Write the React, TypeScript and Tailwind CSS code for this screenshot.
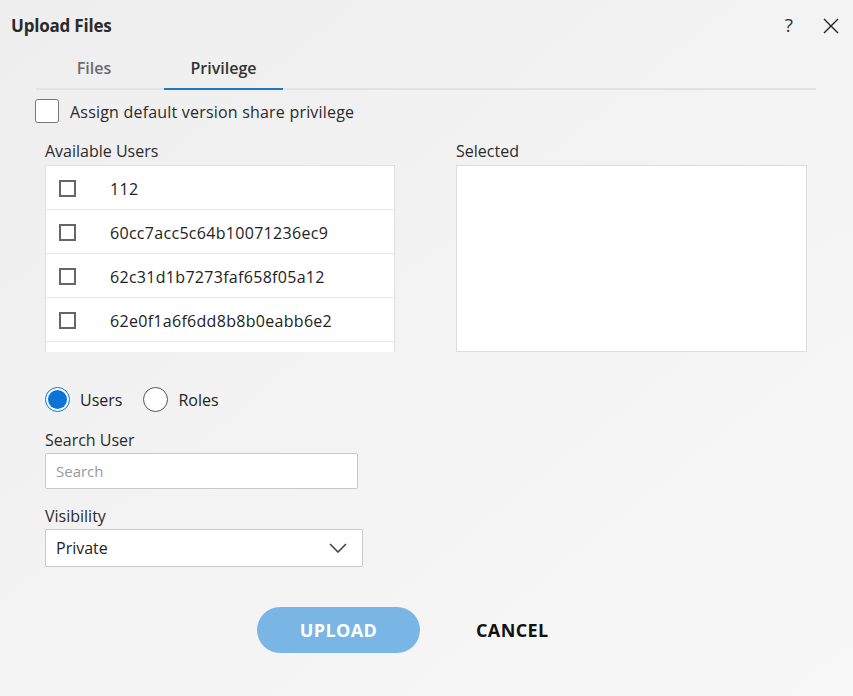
import React from "react";

const users = ["112", "60cc7acc5c64b10071236ec9", "62c31d1b7273faf658f05a12", "62e0f1a6f6dd8b8b0eabb6e2"];

export default function App() {
  return (
    <div
      className="relative w-[853px] h-[696px] overflow-hidden bg-gradient-to-br from-[#eeeeee] to-[#f8f8f8] text-[#222]"
      style={{ fontFamily: '"Open Sans", "Noto Sans", sans-serif' }}
    >
      {/* header */}
      <div className="flex items-center h-[50px] pl-[11px] pr-[14px]">
        <h1 className="text-[17px] font-bold text-[#2b2b2b] tracking-[-0.2px] mt-[2px]">Upload Files</h1>
        <div className="ml-auto flex items-center gap-[30px]">
          <span className="text-[19px] text-[#333] leading-none">?</span>
          <svg width="16" height="16" viewBox="0 0 16 16" className="mt-[1px]">
            <path d="M1 1 L15 15 M15 1 L1 15" stroke="#222" strokeWidth="1.4" />
          </svg>
        </div>
      </div>

      {/* tabs */}
      <div className="ml-[36px] w-[780px] flex border-b-2 border-[#e2e2e2] h-[40px]">
        <div className="w-[128px] flex justify-center pr-[12px] pt-[6px] text-[16px] leading-[24px] font-semibold text-[#6b6b6b]">Files</div>
        <div className="w-[119px] flex justify-center pt-[6px] text-[16px] leading-[24px] font-semibold text-[#333] border-b-2 border-[#1a7bc4] -mb-[2px]">
          Privilege
        </div>
      </div>

      {/* default privilege */}
      <div className="flex items-center ml-[35px] mt-[8px] gap-[11px]">
        <div className="w-[24px] h-[24px] bg-white border border-[#777] rounded-[3px]" />
        <span className="text-[16px] leading-[24px] tracking-[0.2px] text-[#2b2b2b] mt-[2px]">Assign default version share privilege</span>
      </div>

      {/* lists */}
      <div className="flex ml-[45px] mt-[16px] gap-[61px]">
        <div className="flex flex-col">
          <div className="text-[16px] leading-[22px] text-[#2b2b2b] mb-[3px]">Available Users</div>
          <div className="w-[350px] h-[187px] bg-white border border-[#e0e0e0] border-b-0 overflow-hidden">
            {users.map((u) => (
              <div key={u} className="flex items-center h-[44px] pt-[2px] border-b border-[#e6e6e6]">
                <div className="ml-[13px] w-[17px] h-[17px] border-2 border-[#666] bg-white" />
                <span className="ml-[34px] text-[16px] tracking-[0.3px] text-[#222]">{u}</span>
              </div>
            ))}
          </div>
        </div>
        <div className="flex flex-col">
          <div className="text-[16px] leading-[22px] text-[#2b2b2b] mb-[3px]">Selected</div>
          <div className="w-[351px] h-[187px] bg-white border border-[#dcdcdc]" />
        </div>
      </div>

      {/* user / role switch */}
      <div className="flex items-center ml-[45px] mt-[35px]">
        <div className="w-[25px] h-[25px] rounded-full border border-[#0b74d4] bg-white flex items-center justify-center">
          <div className="w-[19px] h-[19px] rounded-full bg-[#0b74d4]" />
        </div>
        <span className="ml-[10px] text-[16px] text-[#222]">Users</span>
        <div className="ml-[21px] w-[25px] h-[25px] rounded-full border border-[#555] bg-white" />
        <span className="ml-[10px] text-[16px] text-[#222]">Roles</span>
      </div>

      {/* search */}
      <div className="ml-[45px] mt-[17px] text-[16px] leading-[22px] text-[#2b2b2b]">Search User</div>
      <div className="ml-[45px] mt-[2px] w-[313px] h-[36px] bg-white border border-[#c8c8c8] rounded-[2px] flex items-center pl-[10px] text-[15px] text-[#9a9a9a]">
        Search
      </div>

      {/* visibility */}
      <div className="ml-[45px] mt-[16px] text-[16px] leading-[22px] text-[#2b2b2b]">Visibility</div>
      <div className="ml-[45px] mt-[2px] w-[318px] h-[38px] bg-white border border-[#c8c8c8] rounded-[2px] flex items-center pl-[10px] pr-[15px] text-[16px] text-[#222]">
        Private
        <svg width="18" height="10" viewBox="0 0 18 10" className="ml-auto">
          <path d="M1 1 L9 9 L17 1" stroke="#444" strokeWidth="1.6" fill="none" />
        </svg>
      </div>

      {/* actions */}
      <div className="flex items-center ml-[257px] mt-[40px]">
        <div className="w-[163px] h-[46px] rounded-full bg-[#7ab6e5] flex items-center justify-center text-white font-bold text-[18px] tracking-[0.4px]">
          UPLOAD
        </div>
        <div className="ml-[56px] font-bold text-[18px] text-[#111] tracking-[0.4px]">CANCEL</div>
      </div>
    </div>
  );
}
